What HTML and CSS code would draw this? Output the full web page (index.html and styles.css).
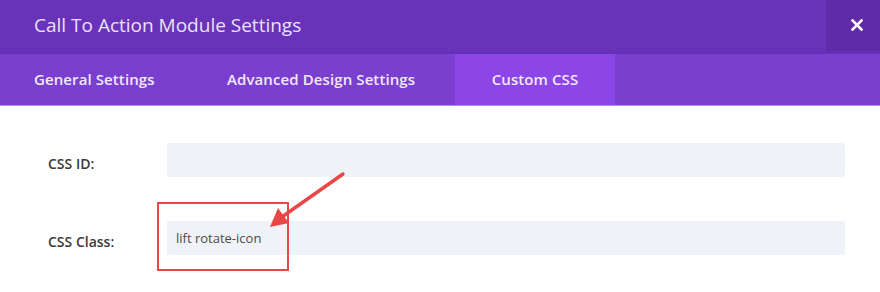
FILE: index.html
```html
<!DOCTYPE html>
<html>
<head>
<meta charset="utf-8">
<link rel="stylesheet" href="styles.css">
</head>
<body>
<div class="modal">
  <header class="head">
    <h1 class="title">Call To Action Module Settings</h1>
    <button class="close" aria-label="Close">
      <svg width="12" height="12" viewBox="0 0 12 12"><path d="M1.5 1.5 L10.5 10.5 M10.5 1.5 L1.5 10.5" stroke="#fff" stroke-width="2.6" stroke-linecap="square"/></svg>
    </button>
  </header>
  <nav class="tabs">
    <span class="tab tab-general">General Settings</span>
    <span class="tab tab-advanced">Advanced Design Settings</span>
    <span class="tab tab-custom active">Custom CSS</span>
  </nav>
  <section class="body">
    <div class="row">
      <label class="label">CSS ID:</label>
      <div class="input"></div>
    </div>
    <div class="row">
      <label class="label">CSS Class:</label>
      <div class="input">lift rotate-icon</div>
    </div>
    <div class="highlight"></div>
    <svg class="arrow" width="100" height="80" viewBox="0 0 100 80">
      <line x1="86" y1="14" x2="22" y2="59" stroke="#ea4646" stroke-width="3.5" stroke-linecap="round"/>
      <polygon points="13,67 21,48 32,63" fill="#ea4646"/>
    </svg>
  </section>
</div>
</body>
</html>
```

FILE: styles.css
```css
* { box-sizing: border-box; }
html, body { margin: 0; padding: 0; background: #fff; }
body { font-family: "Open Sans", "Liberation Sans", sans-serif; width: 880px; height: 292px; overflow: hidden; }

.modal { width: 880px; }

.head {
  height: 54px;
  background: #6833b8;
  display: flex;
  align-items: stretch;
  border-bottom: 3px solid #6430b4;
}
.title {
  margin: 0;
  padding-left: 34px;
  flex: 1;
  font-size: 19px;
  font-weight: 400;
  color: #ebe2f8;
  line-height: 51px;
}
.close {
  width: 54px;
  border: 0;
  padding: 0;
  margin: 0;
  background: #5f2ba9;
  display: flex;
  align-items: center;
  justify-content: center;
  padding-left: 8px;
  padding-bottom: 2px;
}

.tabs {
  height: 52px;
  background: #7b3fcf;
  display: flex;
  align-items: stretch;
  border-bottom: 1px solid #b48be6;
}
.tab {
  font-size: 15px;
  font-weight: 600;
  color: #f1e8fc;
  display: flex;
  align-items: center;
  padding-bottom: 2px;
  letter-spacing: 0.1px;
}
.tab-general { padding-left: 34px; width: 227px; }
.tab-advanced { width: 228px; }
.tab-custom { width: 160px; justify-content: center; }
.tab.active { background: #8c45e6; }

.body {
  position: relative;
  padding: 37px 35px 0 48px;
}
.row {
  display: flex;
  align-items: center;
  height: 34px;
  margin-bottom: 44px;
}
.label {
  width: 119px;
  font-size: 14px;
  font-weight: 600;
  color: #3a3a3a;
  padding-top: 6px;
}
.input {
  flex: 1;
  height: 34px;
  background: #eff3f7;
  border-radius: 2px;
  font-size: 13px;
  color: #4a4a4a;
  padding-left: 9px;
  line-height: 34px;
}
.highlight {
  position: absolute;
  left: 157px;
  top: 96px;
  width: 132px;
  height: 69px;
  border: 2.5px solid #e94848;
}
.arrow {
  position: absolute;
  left: 257px;
  top: 54px;
}
```
